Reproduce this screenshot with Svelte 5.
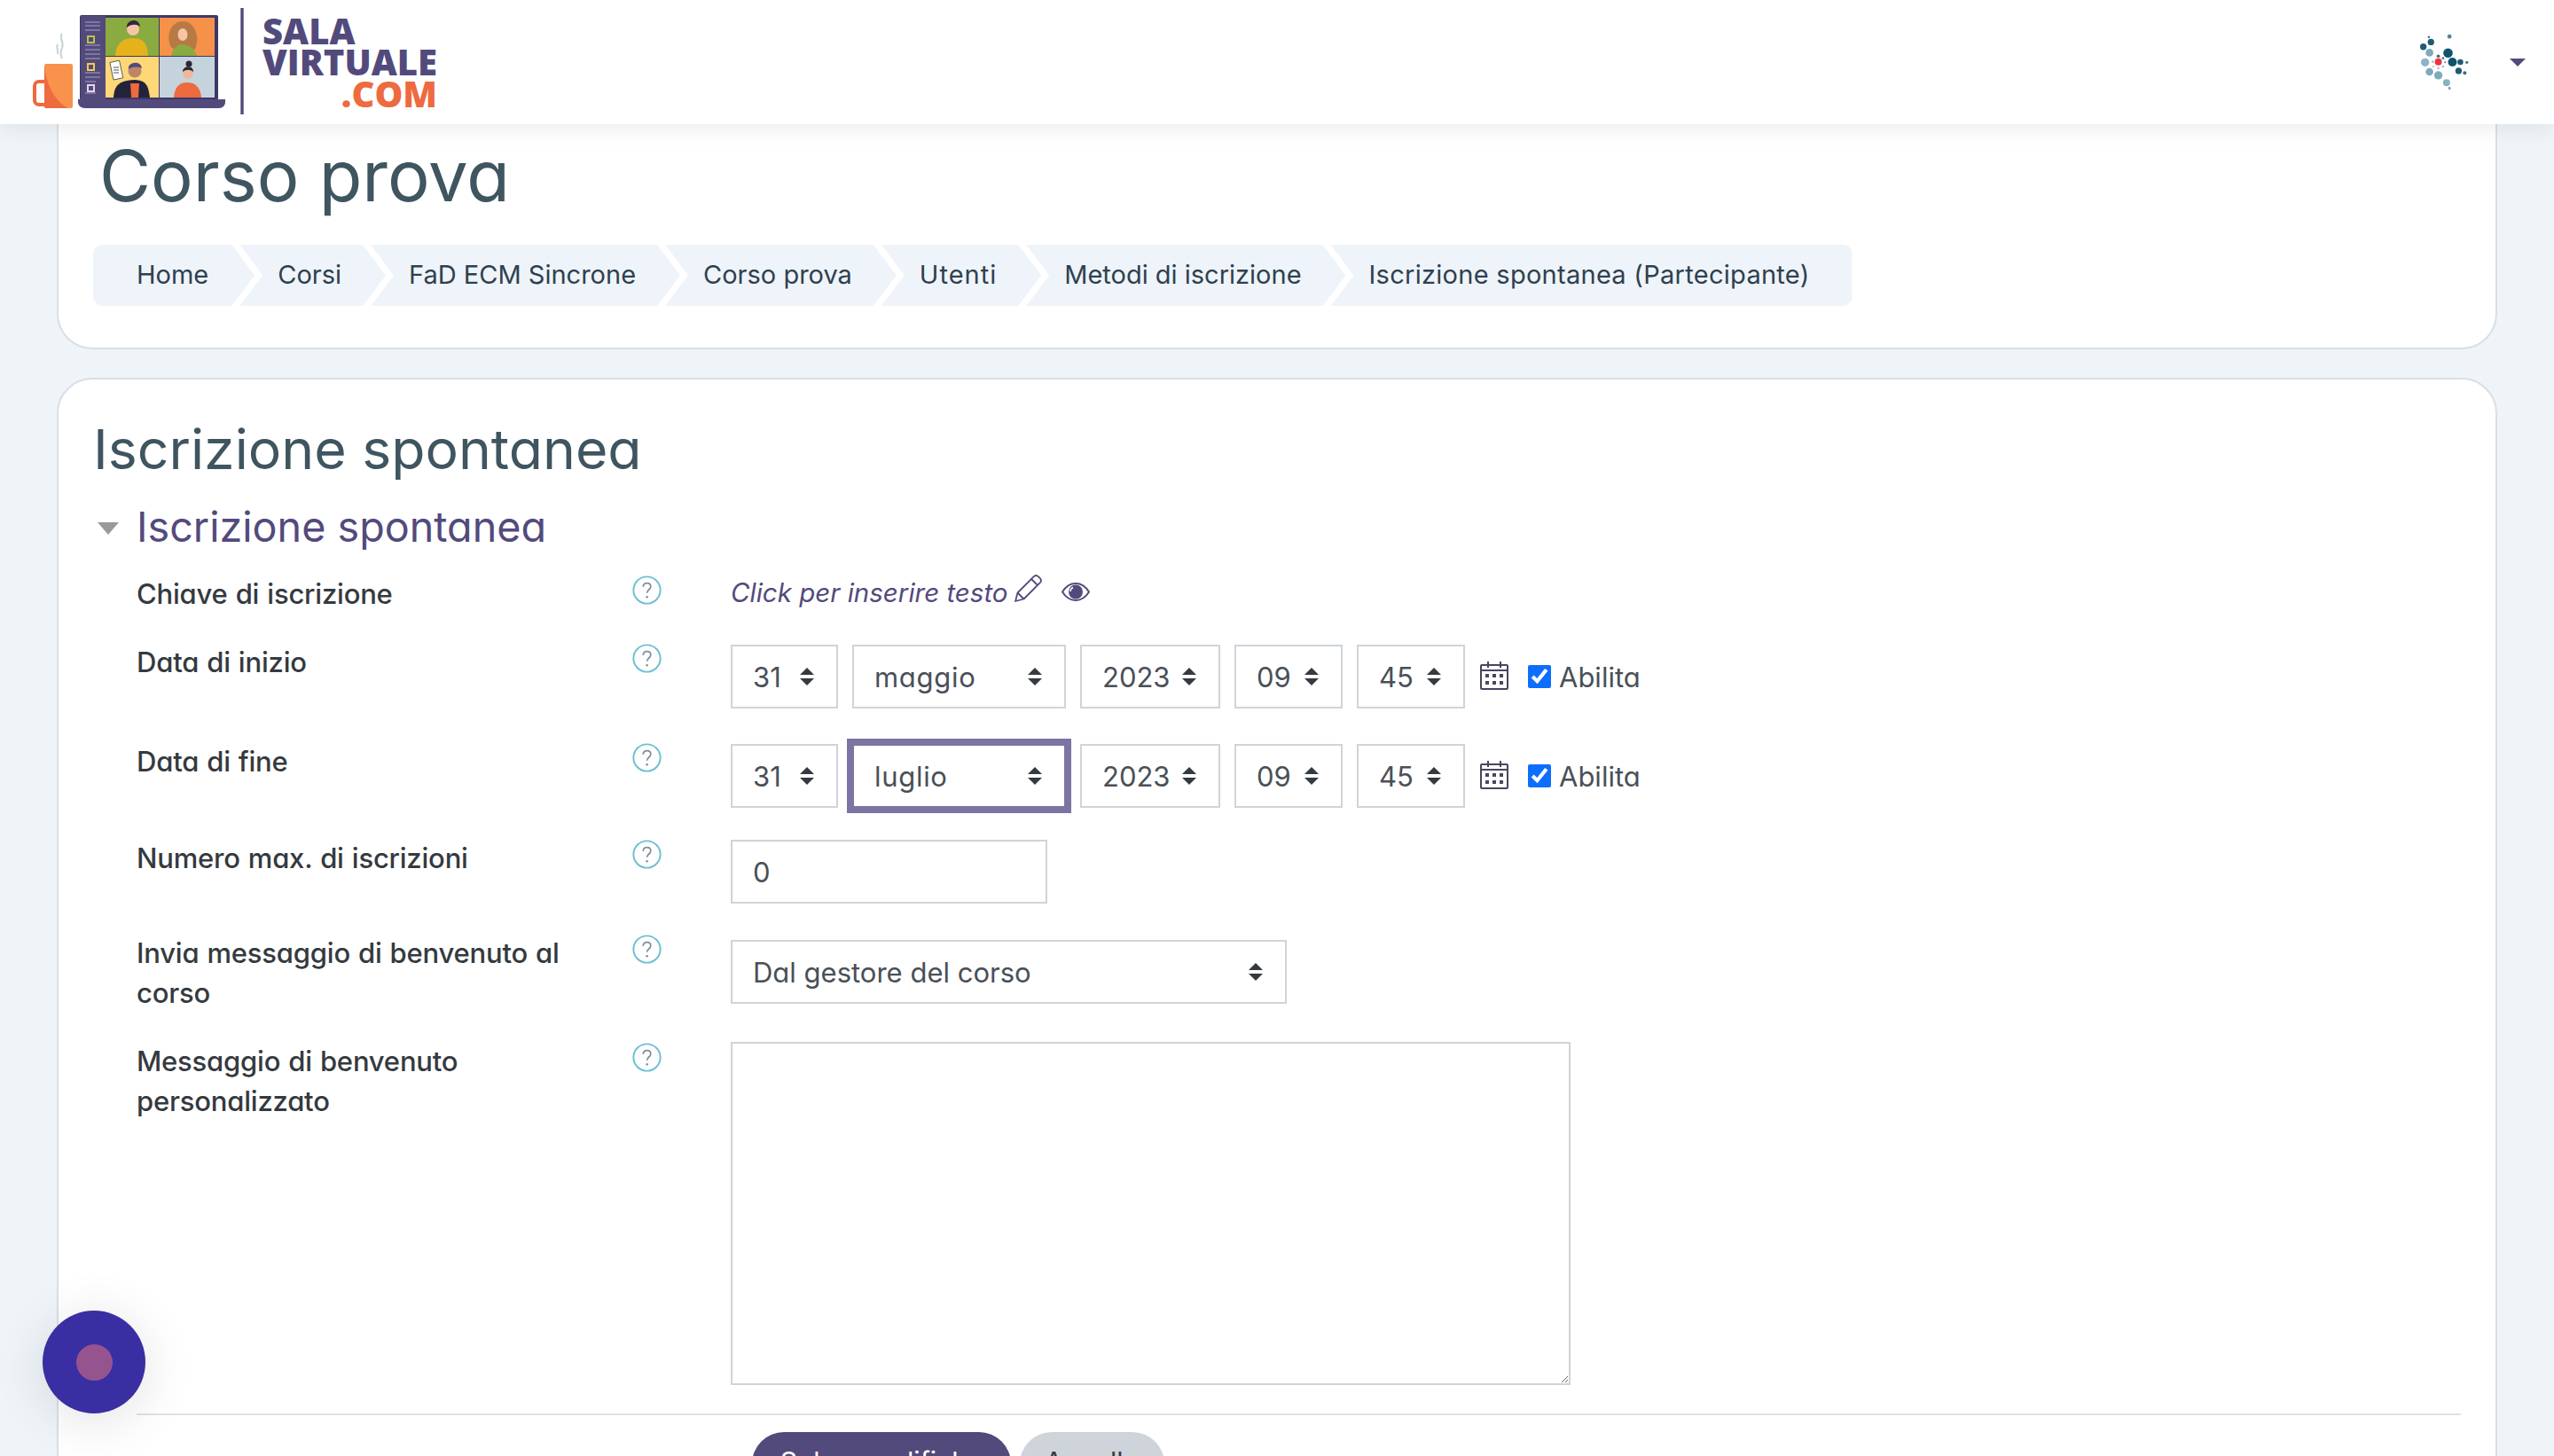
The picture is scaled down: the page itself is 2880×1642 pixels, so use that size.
<script>
  const crumbs = ['Home', 'Corsi', 'FaD ECM Sincrone', 'Corso prova', 'Utenti', 'Metodi di iscrizione', 'Iscrizione spontanea (Partecipante)']
  const months = ['gennaio', 'febbraio', 'marzo', 'aprile', 'maggio', 'giugno', 'luglio', 'agosto', 'settembre', 'ottobre', 'novembre', 'dicembre']
  const days = Array.from({ length: 31 }, (_, i) => String(i + 1))
  const years = ['2021', '2022', '2023', '2024', '2025']
  const hours = Array.from({ length: 24 }, (_, i) => String(i).padStart(2, '0'))
  const minutes = Array.from({ length: 60 }, (_, i) => String(i).padStart(2, '0'))

  // network dots of the user picture: x, y, r, fill
  const dots = [
    [235, 130, 4, '#4a7488'], [305, 128, 7, '#5b7f90'], [242, 147, 11, '#1f5a73'], [216, 163, 11, '#1f5a73'],
    [237, 183, 13, '#7fa9bd'], [300, 184, 16, '#0f5270'], [222, 216, 14, '#8cb3c6'], [315, 215, 15, '#0f5270'],
    [342, 215, 10, '#1f5a73'], [364, 216, 5, '#4a7488'], [237, 248, 13, '#7fa9bd'], [267, 260, 14, '#7fa9bd'],
    [336, 245, 11, '#1f5a73'], [357, 252, 6, '#3f6a80'], [295, 285, 12, '#8cb0c2'], [305, 304, 5, '#8aa6b4'],
    [267, 195, 6, '#4a7488'], [283, 202, 4, '#4a7488'], [248, 214, 4, '#a8bcc8'], [290, 216, 3, '#4a7488'],
    [283, 230, 4, '#a8bcc8'], [267, 236, 4, '#a8bcc8'], [250, 230, 3, '#a8bcc8'], [267, 214, 12, '#ef3340']
  ]
</script>

{#snippet help()}
  <svg class="help" viewBox="0 0 34 34" aria-hidden="true">
    <circle cx="17" cy="17" r="15.6" fill="none" stroke="#6dbfd3" stroke-width="2" />
    <path d="M12.6 13.2c.2-2.700 2-4.200 4.500-4.200 2.500 0 4.300 1.600 4.300 3.800 0 3.600-4.300 3.800-4.300 7.600" fill="none" stroke="#7f8f98" stroke-width="1.800" />
    <circle cx="17.100" cy="25" r="1.300" fill="#7f8f98" />
  </svg>
{/snippet}

{#snippet dateRow(month, focused)}
  <div class="date-row">
    <select class="ctl w-day" value="31">
      {#each days as d}<option>{d}</option>{/each}
    </select>
    <select class="ctl w-month" class:focused value={month}>
      {#each months as m}<option>{m}</option>{/each}
    </select>
    <select class="ctl w-year" value="2023">
      {#each years as y}<option>{y}</option>{/each}
    </select>
    <select class="ctl w-time" value="09">
      {#each hours as h}<option>{h}</option>{/each}
    </select>
    <select class="ctl w-time" value="45">
      {#each minutes as m}<option>{m}</option>{/each}
    </select>
    <svg class="calendar" viewBox="0 0 32 32" aria-hidden="true">
      <g fill="none" stroke="#4a4560" stroke-width="2">
        <rect x="1" y="4" width="30" height="27" rx="1" />
        <path d="M1 10h30M9 0v7M23 0v7" />
      </g>
      <g fill="#4a4560">
        <rect x="6" y="14" width="4" height="4" /><rect x="14" y="14" width="4" height="4" /><rect x="22" y="14" width="4" height="4" />
        <rect x="6" y="22" width="4" height="4" /><rect x="14" y="22" width="4" height="4" /><rect x="22" y="22" width="4" height="4" />
      </g>
    </svg>
    <label class="enable"><input type="checkbox" checked /> Abilita</label>
  </div>
{/snippet}

<div class="page">
  <header class="topbar">
    <a class="brand" href="#top">
      <svg class="brand-art" viewBox="0 0 280 140" aria-hidden="true">
        <path d="M70 38c-4 6 3 9 0 16-2 4-2 8 0 12M65 50c-2 4 1 6 0 11" fill="none" stroke="#c6d2d4" stroke-width="2" />
        <rect x="39" y="92" width="16" height="26" rx="5" fill="none" stroke="#ee6a3f" stroke-width="4" />
        <rect x="50" y="72" width="32" height="50" rx="2" fill="#f8924c" />
        <path d="M50 74c2 20 10 38 26 48H52a2 2 0 0 1-2-2z" fill="#ee6a3f" />
        <rect x="90" y="17" width="156" height="96" rx="2" fill="#3e3868" />
        <rect x="91" y="18" width="28" height="94" fill="#534a7c" />
        <g fill="none" stroke="#8d86ab" stroke-width="1.400">
          <path d="M96 25h17M96 29h17M96 34h17M96 51h17M96 56h17M96 61h17M96 66h17M96 82h17M96 87h17M96 92h12M96 105h12" />
        </g>
        <g fill="none" stroke-width="2">
          <rect x="99" y="41" width="7" height="7" stroke="#b6c34a" />
          <rect x="99" y="72" width="7" height="7" stroke="#f0c94c" />
          <rect x="99" y="96" width="7" height="7" stroke="#e4d6ef" />
        </g>
        <rect x="119" y="20" width="60" height="43" fill="#8aab3f" />
        <rect x="180" y="20" width="62" height="43" fill="#f59149" />
        <rect x="119" y="64" width="60" height="46" fill="#fed877" />
        <rect x="180" y="64" width="62" height="46" fill="#c5d4dc" />
        <!-- people -->
        <path d="M130 63c1-14 8-20 20-20s16 6 17 20z" fill="#e6b21c" />
        <circle cx="150" cy="33" r="7" fill="#f5c6a5" />
        <path d="M143 31c-1-9 14-12 15-1-4-3-10-3-15 1z" fill="#33283d" />
        <path d="M194 54c-6-6-6-29 12-30 14 0 19 18 15 28 0 4-4 6-8 4-6 2-14 3-19-2z" fill="#b77a45" />
        <path d="M193 63c2-9 7-13 13-13s13 4 16 13z" fill="#8aab3f" />
        <ellipse cx="206" cy="39" rx="5.500" ry="7" fill="#f5c6a5" />
        <path d="M128 110c1-14 6-19 24-20 13 1 15 6 17 20z" fill="#23233a" />
        <path d="M147 94h10l-1 16h-8z" fill="#ee6a3f" />
        <circle cx="152" cy="80" r="7.500" fill="#bd8465" />
        <path d="M145 78c-2-8 14-11 15-1-5-2-10-2-15 1z" fill="#534a7c" />
        <rect x="126" y="69" width="11" height="20" fill="#fff" stroke="#444" stroke-width=".8" transform="rotate(-12 132 80)" />
        <path d="M128 76h6M128 79h6M128 82h6" stroke="#555" stroke-width="1" />
        <path d="M196 110c1-11 5-17 15-17s15 6 16 17z" fill="#ee6a3f" />
        <ellipse cx="212" cy="82" rx="6" ry="7" fill="#f0b79a" />
        <circle cx="213" cy="72" r="3.500" fill="#2c2538" />
        <path d="M206 81c0-7 12-8 12 0-4-3-8-3-12 0z" fill="#2c2538" />
        <path d="M90 112h164v3c0 4-3 7-7 7H96c-5 0-8-3-8-7v-3z" fill="#534a7c" />
        <path d="M273 9v120" stroke="#534a7c" stroke-width="3.400" />
      </svg>
      <div class="brand-text">
        <span>SALA</span>
        <span>VIRTUALE</span>
        <span class="dotcom">.COM</span>
      </div>
    </a>
    <div class="user-menu">
      <svg class="user-pic" viewBox="190 110 190 210" aria-hidden="true">
        {#each dots as [x, y, r, fill]}
          <circle cx={x} cy={y} {r} {fill} />
        {/each}
      </svg>
      <span class="caret"></span>
    </div>
  </header>

  <section class="card head-card">
    <h1>Corso prova</h1>
    <ul class="crumbs">
      {#each crumbs as crumb}
        <li>{crumb}</li>
      {/each}
    </ul>
  </section>

  <section class="card main-card">
    <h2>Iscrizione spontanea</h2>
    <h3><span class="toggle"></span>Iscrizione spontanea</h3>

    <div class="row">
      <div class="label">Chiave di iscrizione</div>
      {@render help()}
      <div class="key">
        <em>Click per inserire testo</em>
        <svg class="pencil" viewBox="0 0 32 32" aria-hidden="true">
          <path d="M2 30l2.500-9.500L22.800 2.200a3.600 3.600 0 0 1 5 0l2 2a3.600 3.600 0 0 1 0 5L11.500 27.500zM4.500 20.500l7 7M20 5l7 7" fill="none" stroke="#534a7c" stroke-width="1.800" stroke-linejoin="round" />
        </svg>
        <svg class="eye" viewBox="0 0 32 21" aria-hidden="true">
          <path d="M1 10.500C5 4 10 1 16 1s11 3 15 9.500C27 17 22 20 16 20S5 17 1 10.500z" fill="#fff" stroke="#534a7c" stroke-width="2" />
          <circle cx="16" cy="10.500" r="8" fill="#534a7c" />
          <path d="M13 5.500c-2 1-3 2.500-3 4.500" fill="none" stroke="#fff" stroke-width="1.500" />
        </svg>
      </div>
    </div>

    <div class="row">
      <div class="label">Data di inizio</div>
      {@render help()}
      <div class="control tail-5">{@render dateRow('maggio', false)}</div>
    </div>

    <div class="row">
      <div class="label">Data di fine</div>
      {@render help()}
      <div class="control tail-2">{@render dateRow('luglio', true)}</div>
    </div>

    <div class="row">
      <div class="label">Numero max. di iscrizioni</div>
      {@render help()}
      <div class="control push-2 tail-1"><input class="ctl number" type="text" value="0" /></div>
    </div>

    <div class="row">
      <div class="label">Invia messaggio di benvenuto al corso</div>
      {@render help()}
      <div class="control push-8 tail-5">
        <select class="ctl sender" value="Dal gestore del corso">
          <option>Dal gestore del corso</option>
          <option>Dal referente del corso</option>
          <option>Dall'utente senza risposta</option>
        </select>
      </div>
    </div>

    <div class="row">
      <div class="label">Messaggio di benvenuto personalizzato</div>
      {@render help()}
      <div class="control push-1"><textarea class="message"></textarea></div>
    </div>

    <div class="actions">
      <button class="btn primary">Salva modifiche</button>
      <button class="btn secondary">Annulla</button>
    </div>
  </section>

  <button class="chat" aria-label="Chat"><span></span></button>
</div>

<style>
  :global(body) {
    margin: 0;
    background: #eff4f8;
  }
  .page {
    position: relative;
    height: 1642px;
    overflow: hidden;
    font-family: Inter, "Liberation Sans", sans-serif;
    font-feature-settings: "cv11";
    color: #343a40;
  }

  .topbar {
    position: relative;
    z-index: 2;
    display: flex;
    justify-content: space-between;
    align-items: center;
    height: 140px;
    background: #fff;
    box-shadow: 0 4px 24px rgba(0, 0, 0, 0.08);
  }
  .brand {
    display: flex;
    align-items: center;
    text-decoration: none;
  }
  .brand-art {
    width: 280px;
    height: 140px;
  }
  .brand-text {
    display: flex;
    flex-direction: column;
    margin-left: 16px;
    font-family: "Open Sans", sans-serif;
    font-feature-settings: normal;
    font-weight: 800;
    font-size: 40px;
    line-height: 35.500px;
    color: #534a7c;
  }
  .dotcom {
    text-align: right;
    color: #ee6a3f;
  }
  .user-menu {
    display: flex;
    align-items: center;
    margin-right: 32px;
  }
  .user-pic {
    width: 63px;
    height: 70px;
    margin-right: 43px;
  }
  .caret {
    width: 0;
    height: 0;
    border-left: 9px solid transparent;
    border-right: 9px solid transparent;
    border-top: 9px solid #534a7c;
  }

  .card {
    margin: 0 64px;
    background: #fff;
    border: 2px solid #d9dfe4;
    border-radius: 40px;
  }
  .head-card {
    height: 254px;
    border-top: 0;
    border-top-left-radius: 0;
    border-top-right-radius: 0;
    box-sizing: border-box;
    padding: 0 39px;
    margin-bottom: 32px;
  }
  h1 {
    margin: 0;
    padding: 16px 0 0 7px;
    font-size: 79.500px;
    line-height: 84px;
    font-weight: 400;
    color: #3f5560;
  }
  .crumbs {
    display: inline-flex;
    list-style: none;
    margin: 36px 0 0;
    padding: 0;
    border-radius: 11px;
    overflow: hidden;
    font-feature-settings: normal;
    font-size: 29px;
    color: #2f4050;
  }
  .crumbs li {
    display: flex;
    align-items: center;
    box-sizing: border-box;
    height: 69px;
    padding: 0 50px 2px 43px;
    margin-right: -17px;
    background: #eef4f9;
    white-space: nowrap;
    clip-path: polygon(0 0, calc(100% - 26px) 0, 100% 50%, calc(100% - 26px) 100%, 0 100%, 26px 50%);
  }
  .crumbs li:first-child {
    padding-left: 49px;
    padding-right: 52px;
    clip-path: polygon(0 0, calc(100% - 26px) 0, 100% 50%, calc(100% - 26px) 100%, 0 100%);
  }
  .crumbs li:nth-child(5) {
    letter-spacing: 1px;
  }
  .crumbs li:last-child {
    margin-right: 0;
    padding-right: 48px;
    letter-spacing: 0.28px;
    clip-path: polygon(0 0, 100% 0, 100% 100%, 0 100%, 26px 50%);
  }

  .main-card {
    padding: 0 39px;
    min-height: 1400px;
  }
  h2 {
    margin: 0;
    padding-top: 46px;
    font-size: 62.500px;
    line-height: 64px;
    font-weight: 400;
    color: #3f5560;
  }
  h3 {
    display: flex;
    align-items: center;
    margin: 28px 0 0;
    font-size: 46.700px;
    line-height: 56px;
    font-weight: 400;
    color: #534a7c;
  }
  .toggle {
    width: 0;
    height: 0;
    margin: 4px 20px 0 5px;
    border-left: 12px solid transparent;
    border-right: 12px solid transparent;
    border-top: 14px solid #999;
  }

  .row {
    display: grid;
    grid-template-columns: 510px 33px 1fr;
    column-gap: 49px;
    margin: 0 0 32px 49px;
    align-items: start;
  }
  .row:first-of-type {
    margin-top: 25px;
  }
  .label {
    font-size: 31px;
    line-height: 45px;
    font-weight: 500;
    letter-spacing: -0.2px;
    word-spacing: 1px;
    color: #343a40;
  }
  .help {
    width: 33px;
    height: 33px;
    margin-top: 2px;
  }
  .control {
    margin-left: 29px;
    padding-top: 3px;
  }
  .tail-1 { padding-bottom: 1px; }
  .tail-5 { padding-bottom: 5px; }
  .tail-2 { padding-bottom: 2px; }
  .push-1 { padding-top: 1px; }
  .push-2 { padding-top: 2px; }
  .push-8 { padding-top: 8px; }

  .key {
    display: flex;
    align-items: center;
    height: 45px;
    margin: -2px 0 2px 29px;
    font-size: 29.500px;
    color: #534a7c;
  }
  .pencil {
    width: 32px;
    height: 32px;
    margin: -8px 0 0 6px;
  }
  .eye {
    width: 32px;
    height: 21px;
    margin-left: 22px;
  }

  .date-row {
    display: flex;
    align-items: center;
    gap: 16px;
  }
  .ctl {
    box-sizing: border-box;
    height: 72px;
    padding: 0 0 0 23px;
    border: 2px solid #ced4da;
    border-radius: 0;
    background: #fff;
    font: inherit;
    font-feature-settings: "cv11";
    font-size: 31px;
    color: #495057;
    outline: none;
  }
  select.ctl {
    appearance: none;
    background-image: url("data:image/svg+xml,%3Csvg xmlns='http://www.w3.org/2000/svg' viewBox='0 0 16 20'%3E%3Cpath d='M8 0l8 8H0zM8 20l8-8H0z' fill='%23343a40'/%3E%3C/svg%3E");
    background-repeat: no-repeat;
    background-position: right 25px center;
    background-size: 16px 20px;
  }
  .w-day { width: 121px; }
  .w-month { width: 241px; letter-spacing: 0.7px; }
  .w-year { width: 158px; }
  .w-time { width: 122px; }
  .focused {
    box-shadow: 0 0 0 6px #7d74a3;
    border-color: #7d74a3;
  }
  .number { width: 357px; }
  .sender { width: 627px; }
  .message {
    display: block;
    box-sizing: border-box;
    width: 947px;
    height: 387px;
    border: 2px solid #ced4da;
    background: #fff;
  }
  .calendar {
    width: 32px;
    height: 32px;
    margin: -2px 0 0 1px;
  }
  .enable {
    display: flex;
    align-items: center;
    gap: 9px;
    margin-left: 6px;
    font-size: 31px;
    color: #495057;
  }
  .enable input {
    width: 26px;
    height: 26px;
    margin: 0;
    accent-color: #0d6efd;
  }

  .actions {
    display: flex;
    gap: 10px;
    margin-left: 49px;
    margin-top: 1px;
    padding: 19px 0 0 694px;
    border-top: 2px solid #dee2e6;
  }
  .btn {
    height: 72px;
    border: 0;
    border-radius: 36px;
    padding: 0 0 6px;
    font: inherit;
    font-size: 30px;
  }
  .primary {
    width: 292px;
    background: #534a7c;
    color: #fff;
  }
  .secondary {
    width: 163px;
    background: #ced4da;
    color: #343a40;
  }

  .chat {
    position: absolute;
    z-index: 3;
    left: 48px;
    top: 1478px;
    display: flex;
    align-items: center;
    justify-content: center;
    width: 116px;
    height: 116px;
    padding: 0;
    border: 0;
    border-radius: 50%;
    background: #3a2ea3;
    box-shadow: 0 8px 60px rgba(0, 0, 0, 0.12);
  }
  .chat span {
    width: 41px;
    height: 41px;
    border-radius: 50%;
    background: #96548f;
  }
</style>
